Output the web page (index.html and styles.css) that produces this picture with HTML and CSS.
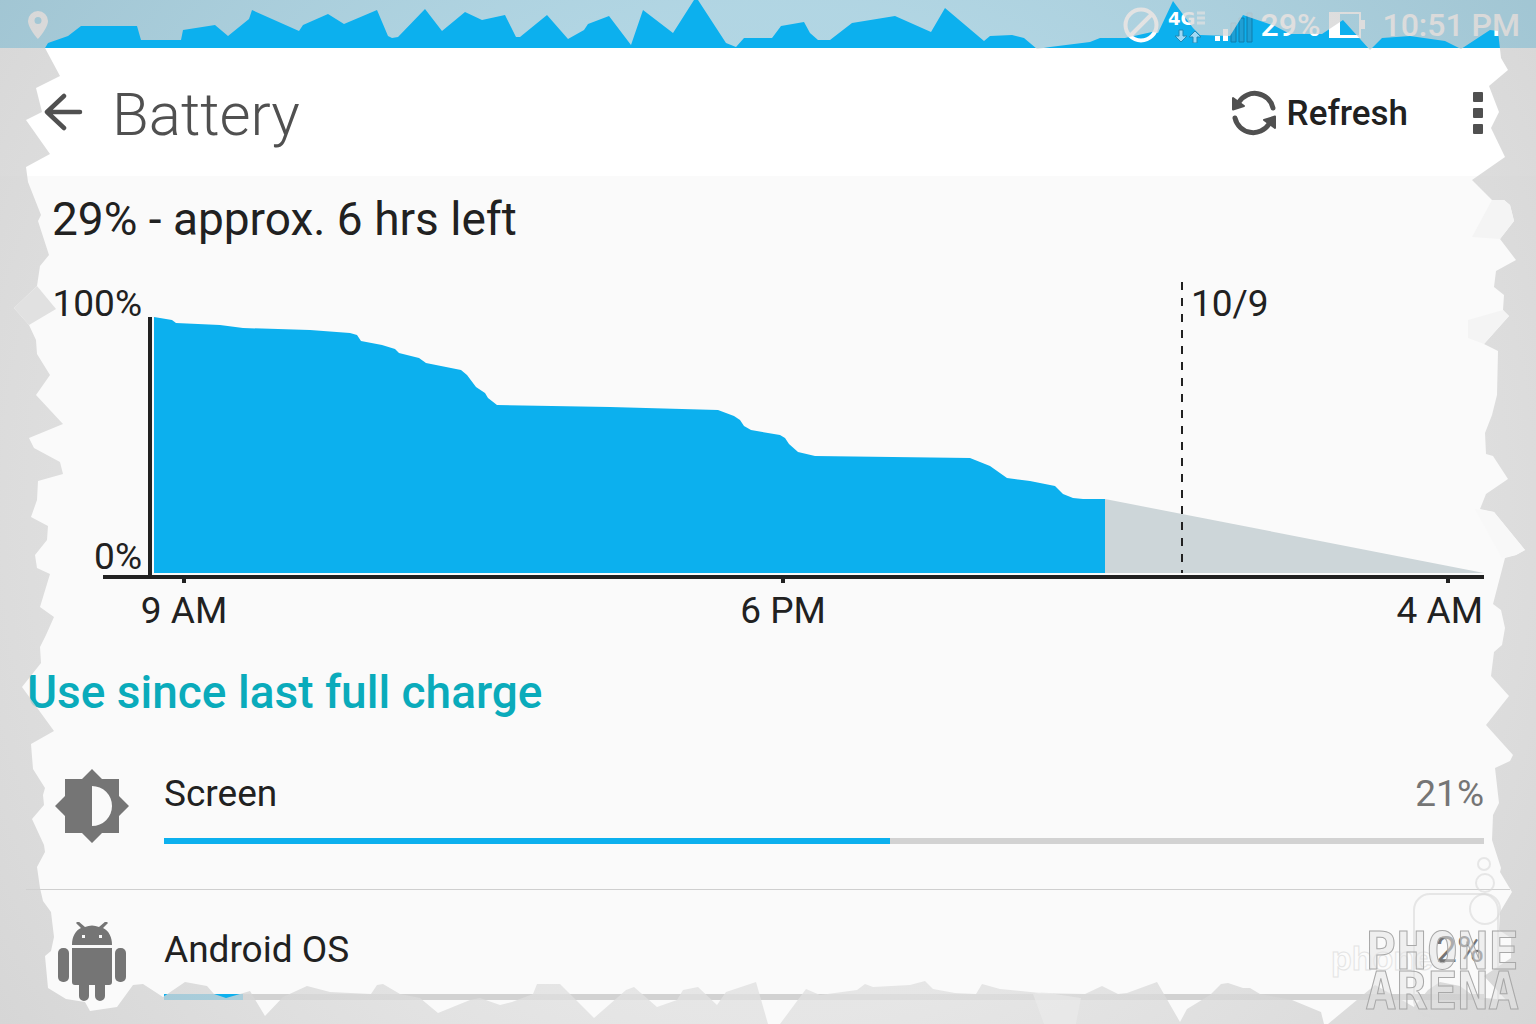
FILE: index.html
```html
<!DOCTYPE html>
<html lang="en">
<head>
<meta charset="utf-8">
<meta name="viewport" content="width=device-width, initial-scale=1">
<title>Battery</title>
<link rel="stylesheet" href="styles.css">
</head>
<body>
<div class="screen">
  <div class="status">
    <svg class="status-pin" width="20" height="28" viewBox="0 0 20 28"><path fill-rule="evenodd" d="M10 0a10 10 0 0 0-10 10c0 7 10 18 10 18s10-11 10-18a10 10 0 0 0-10-10zm0 6a3.500 3.500 0 1 1 0 7a3.500 3.500 0 0 1 0-7z" fill="#fff"/></svg>
    <svg width="36" height="36" viewBox="0 0 36 36"><circle cx="18" cy="18" r="15.500" fill="none" stroke="#fff" stroke-width="4"/><path d="M8 28L28 8" stroke="#fff" stroke-width="4"/></svg>
    <svg width="40" height="36" viewBox="0 0 40 36"><text class="net" x="1" y="18">4G</text><path d="M30 6h8M30 11h8M30 16h8" stroke="#fff" stroke-width="3" opacity=".7"/><path d="M12 23h4v6h4l-6 6-6-6h4zM26 36h4v-6h4l-6-6-6 6h4z" fill="#9fd9f5" stroke="#2188b4"/></svg>
    <svg width="38" height="36" viewBox="0 0 38 36"><path d="M0 29h5v5h-5zM8 22h5v12h-5z" fill="#fff"/><path d="M16 16h5v19h-5zM24 11h5v24h-5zM32 6h5v29h-5z" fill="#1f9fd4" stroke="#0f7cac"/></svg>
    <span class="status-text">29%</span>
    <svg width="38" height="28" viewBox="0 0 38 28"><path d="M1 1h32v8h4v9h-4v9h-32z" fill="#fff"/><path d="M12 3h19v21h-19z" fill="#0cb0ee"/></svg>
    <span class="status-text time">10:51 PM</span>
  </div>

  <header class="bar">
    <button class="icon-button" aria-label="Back"><svg width="40" height="40" viewBox="0 0 40 40"><path d="M36 20H4M20 4L3 20L20 36" fill="none" stroke="#505050" stroke-width="4.500" stroke-linecap="round" stroke-linejoin="round"/></svg></button>
    <h1>Battery</h1>
    <button class="refresh"><svg width="46" height="46" viewBox="0 0 46 46"><path d="M8 12A18.700 18.700 0 0 1 42 18M38 34A18.700 18.700 0 0 1 4 28" fill="none" stroke="#505050" stroke-width="5" stroke-linecap="round"/><path d="M2 8v11.500l11-3.500zM44 38v-11.500l-11 3.500z" fill="#505050" stroke="#505050" stroke-width="2" stroke-linejoin="round"/></svg>Refresh</button>
    <button class="icon-button more" aria-label="More options"><svg width="12" height="42" viewBox="0 0 12 42"><g fill="#505050"><rect x="1" width="10" height="10" rx="1"/><rect x="1" y="16" width="10" height="10" rx="1"/><rect x="1" y="32" width="10" height="10" rx="1"/></g></svg></button>
  </header>

  <main>
    <p class="summary">29% - approx. 6 hrs left</p>
    <svg class="chart" viewBox="0 0 1536 376" role="img" aria-label="Battery level over time">
      <path fill="#0cb0ee" d="M154 57L172 60L176 63L220 65L243 68L310 70L350 73L357 75L361 81L382 85L395 89L399 93L419 98L426 103L461 110L467 115L476 127L485 133L488 138L497 145L610 147L718 150L734 156L740 160L744 166L751 170L780 175L785 178L789 184L798 192L815 196L970 198L990 206L1007 218L1030 221L1055 226L1063 234L1073 238L1083 239H1105V313H154Z"/>
      <path fill="#cdd6d9" d="M1105 239L1484 313H1105Z"/>
      <path stroke="#212121" stroke-width="4" d="M150 57V317M103 317H1484M184 317V323M783 317V323M1448 317V323"/>
      <path stroke="#212121" stroke-width="2" stroke-dasharray="8" d="M1182 22V313"/>
      <g class="axis">
        <text x="142" y="56" text-anchor="end">100%</text>
        <text x="142" y="309" text-anchor="end">0%</text>
        <text x="1191" y="56">10/9</text>
        <text x="184" y="363" text-anchor="middle">9 AM</text>
        <text x="783" y="363" text-anchor="middle">6 PM</text>
        <text x="1483" y="363" text-anchor="end">4 AM</text>
      </g>
    </svg>
    <h2>Use since last full charge</h2>
    <ul class="usage">
      <li>
        <svg class="app-icon" width="76" height="76" viewBox="0 0 76 76"><path fill="#757575" fill-rule="evenodd" d="M38 1L48 11H65V28L75 38L65 48V65H48L38 75L28 65H11V48L1 38L11 28V11H28ZM38 18V58A20 20 0 0 0 38 18Z"/></svg>
        <div class="usage-body">
          <div class="usage-line"><label for="use-screen">Screen</label><span class="percent">21%</span></div>
          <progress id="use-screen" max="100" value="55"></progress>
        </div>
      </li>
      <li>
        <svg class="app-icon" width="76" height="80" viewBox="0 0 76 80"><g fill="#757575"><path fill-rule="evenodd" d="M18 23C18 14 22 8 27 6L22 1L24 -1L31 5Q38 2 45 5L52 -1L54 1L49 6C55 9 58 15 58 23ZM28 13h3v3h-3zM45 13h3v3h-3z"/><path d="M18 26H58V60Q58 63 55 63H51V74A5 5 0 0 1 41 74V63H35V74A5 5 0 0 1 25 74V63H21Q18 63 18 60Z"/><rect x="4" y="26" width="11" height="34" rx="5"/><rect x="61" y="26" width="11" height="34" rx="5"/></g></svg>
        <div class="usage-body">
          <div class="usage-line"><label for="use-os">Android OS</label><span class="percent">2%</span></div>
          <progress id="use-os" max="100" value="6"></progress>
        </div>
      </li>
    </ul>
  </main>

  <svg class="frame" viewBox="0 0 1536 1024" preserveAspectRatio="none" aria-hidden="true">
    <defs><radialGradient id="shade" gradientUnits="userSpaceOnUse" cx="768" cy="512" r="920"><stop offset="0" stop-color="#e4e4e4"/><stop offset=".55" stop-color="#e0e0e0"/><stop offset=".8" stop-color="#d5d5d5"/><stop offset="1" stop-color="#cccccc"/></radialGradient></defs>
    <path fill="url(#shade)" fill-opacity=".78" fill-rule="evenodd" d="M0 0H1536V1024H0Z
    M45 48L48 43L68 36L81 26L137 26L141 40L181 40L183 30L215 25L228 36L249 19L252 10L299 31L303 25L328 14L344 24L377 10L388 36L392 38L398 37L425 9L442 31L465 12L482 20L505 15L511 27L516 37L520 37L547 15L568 39L584 30L588 24L609 16L631 45L643 10L673 33L694 0L698 0L726 43L736 47L744 38L772 38L781 26L804 22L810 33L818 40L830 40L852 23L895 16L931 32L945 8L984 41L990 36L1012 35L1024 38L1037 49L1050 47L1090 42L1100 38L1125 38L1152 32L1158 33L1173 1L1193 28L1200 35L1230 36L1243 15L1275 26L1290 34L1322 34L1343 20L1370 50L1382 38L1410 36L1445 41L1461 49L1490 30L1498 31L1501 58L1508 70L1489 86L1499 112L1491 128L1505 157
    L1472 180L1492 200L1504 200L1510 205L1514 221L1500 239L1516 260L1496 271L1494 287L1504 295L1503 310L1509 316L1484 344L1498 351L1497 395L1492 415L1485 433L1486 454L1493 456L1508 479L1486 494L1480 509L1494 512L1525 550L1516 555L1505 558L1493 604L1501 610L1505 628L1502 645L1494 652L1491 676L1509 696L1486 725L1513 755L1510 761L1495 768L1499 803L1493 815L1492 840L1501 868L1500 872L1512 892L1500 912L1499 930L1511 938L1511 958L1484 976L1506 1000L1475 997L1460 986L1440 982L1428 990L1414 1007L1400 999
    L1375 985L1328 1024L1324 1024L1321 1012L1292 1000L1260 994L1250 988L1243 988L1228 983L1221 984L1210 995L1187 1009L1180 1022L1157 982L1127 993L1118 994L1102 986L1085 994L1040 993L1000 989L982 984L976 994L955 993L933 989L925 981L910 985L873 987L865 984L857 990L820 995L806 989L780 1024L768 1024L756 982L726 992L717 1005L698 987L683 990L677 1000L657 1007L634 987L626 990L594 1018L560 984L537 984L533 994L512 1002L500 1005L480 998L470 1000L438 1013L420 998L400 994L383 984L377 985L371 994L330 992L307 986L283 997L265 1016L250 991L240 994L226 998L214 994L207 986L185 982L163 997L143 984L133 985L117 1007L90 1011L85 1002L66 999L48 988L45 956
    L51 951L54 937L51 912L43 901L40 888L37 867L45 852L44 845L32 819L44 805L43 795L45 788L33 769L31 744L54 731L22 687L41 663L40 647L46 635L54 617L40 607L50 574L37 568L35 555L47 540L48 526L31 517L37 500L38 481L63 474L60 462L34 448L29 438L63 424L36 395L50 375L37 354L36 340L29 325L14 308L37 286L40 266L49 255L38 221L41 215L28 182L26 167L50 154L26 120L42 112L36 88L60 76Z"/>
    <path fill="#e1e1e1" d="M37 286L56 309L29 325L14 308Z"/>
    <path fill="#f4f4f4" d="M1492 200H1504L1510 205L1514 221L1500 239L1472 237ZM1503 310L1509 316L1484 344L1468 338V320Z"/>
    <path fill="#f8f8f8" d="M1475 509L1494 512L1525 550L1516 555L1502 558Z"/>
    <path fill="#eeeeee" opacity=".5" d="M1033 994L1042 992L1081 998L1076 1024H1044Z"/>
  </svg>

  <svg class="watermark" width="204" height="168" viewBox="0 0 204 168" aria-hidden="true">
    <g fill="none" stroke="#d8d8d8" stroke-opacity=".6" stroke-width="2"><rect x="84" y="38" width="84" height="122" rx="16"/><circle cx="154" cy="8" r="6"/><circle cx="155" cy="27" r="9"/><circle cx="155" cy="53" r="15"/></g>
    <text class="mark-small" x="1" y="114">phone</text>
    <g class="mark"><text x="189" y="113" text-anchor="end">PHONE</text><text x="189" y="153" text-anchor="end">ARENA</text></g>
  </svg>
</div>
</body>
</html>
```
FILE: styles.css
```css
* { box-sizing: border-box; }

body {
  margin: 0;
  background: #fafafa;
  color: #212121;
  font-family: Roboto, "Liberation Sans", sans-serif;
}

.screen {
  position: relative;
  height: 100vh;
  overflow: hidden;
}

.status {
  display: flex;
  align-items: center;
  gap: 8px;
  height: 48px;
  padding: 2px 16px 0 28px;
  background: #0cb0ee;
  color: #fff;
}

.status svg { flex: none; }
.status .status-pin { margin-right: auto; }

.status-text {
  font-size: 32px;
  line-height: 48px;
  font-weight: 500;
  white-space: nowrap;
}

.time { margin-left: 8px; }
.net { font: bold 18px "DejaVu Sans", sans-serif; fill: #fff; }

.bar {
  display: flex;
  align-items: center;
  height: 128px;
  padding: 0 52px 0 44px;
  background: #fff;
}

h1, h2, p, ul { margin: 0; padding: 0; }

h1 {
  flex: 1;
  margin-left: 28px;
  padding-top: 6px;
  color: #505050;
  font-size: 60px;
  line-height: 72px;
  font-weight: 300;
}

button {
  display: flex;
  align-items: center;
  padding: 0;
  border: 0;
  background: none;
  color: #212121;
  font: inherit;
}

.refresh {
  gap: 10px;
  padding-top: 2px;
  font-size: 35px;
  font-weight: 500;
}

.more {
  margin-left: 64px;
  padding-top: 2px;
}

.summary {
  padding: 15px 52px 13px;
  font-size: 46px;
  line-height: 56px;
}

.chart { display: block; width: 100%; }
.axis { font-size: 37px; fill: #212121; }

h2 {
  padding: 28px 27px 16px;
  color: #0aabbb;
  font-size: 46px;
  line-height: 56px;
  font-weight: 500;
}

.usage {
  margin: 0 26px;
  list-style: none;
}

li {
  display: flex;
  gap: 34px;
  height: 153px;
  padding: 32px 26px 0 28px;
}

li + li {
  height: 156px;
  border-top: 1px solid #cfcfcf;
}

.app-icon { flex: none; }
.usage-body { flex: 1; }

.usage-line {
  display: flex;
  justify-content: space-between;
  padding-top: 2px;
  font-size: 37px;
  line-height: 48px;
}

li + li .usage-line { padding-top: 4px; }

.percent { color: #757575; }

progress {
  display: block;
  width: 100%;
  height: 6px;
  margin-top: 20px;
  border: 0;
  appearance: none;
  background: #d2d2d2;
}

progress::-webkit-progress-bar { background: #d2d2d2; }
progress::-webkit-progress-value { background: #0cb0ee; }

.frame {
  position: absolute;
  inset: 0;
  width: 100%;
  height: 100%;
  pointer-events: none;
}

.watermark {
  position: absolute;
  right: 2px;
  bottom: 0;
  pointer-events: none;
}

.mark {
  font: bold 51px "DejaVu Sans Mono", monospace;
  fill: #e4e4e4;
  fill-opacity: .5;
  stroke: #a8a8a8;
  stroke-width: 1px;
}

.mark-small {
  font: bold 34px "Liberation Sans", sans-serif;
  fill: #fff;
  fill-opacity: .5;
  stroke: #e4e4e4;
  stroke-width: 1px;
}
```
